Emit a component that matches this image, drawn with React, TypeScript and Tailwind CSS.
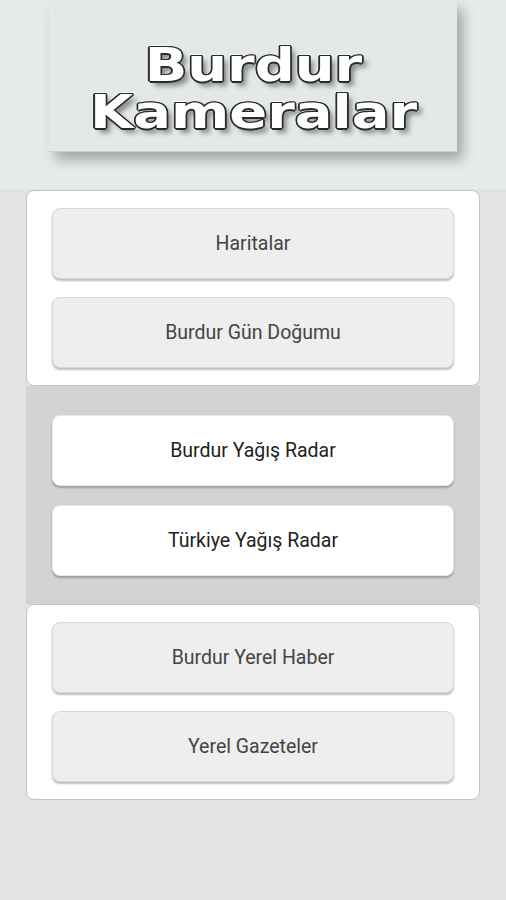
const groups = [
  { tone: "white", items: ["Haritalar", "Burdur Gün Doğumu"] },
  { tone: "gray", items: ["Burdur Yağış Radar", "Türkiye Yağış Radar"] },
  { tone: "white", items: ["Burdur Yerel Haber", "Yerel Gazeteler"] },
];

function MenuButton({ label, light }: { label: string; light: boolean }) {
  return (
    <button
      className={`h-[71px] w-full rounded-lg border text-[19.5px] shadow-[0_2px_2px_rgba(0,0,0,0.25)] ${
        light
          ? "bg-white border-[#e8e8e8] text-[#222]"
          : "bg-[#eeeeee] border-[#dcd6d6] text-[#444]"
      }`}
    >
      {label}
    </button>
  );
}

// outlined, fattened title text
const titleCls =
  "block font-['DejaVu_Sans',sans-serif] text-[47px] font-bold leading-[47px] text-white scale-x-[1.19] [-webkit-text-stroke:3px_#fff] [paint-order:stroke_fill] [text-shadow:1.5px_0_#2a2a2a,-1.5px_0_#2a2a2a,0_1.5px_#2a2a2a,0_-1.5px_#2a2a2a,1px_1px_#2a2a2a,-1px_-1px_#2a2a2a,1px_-1px_#2a2a2a,-1px_1px_#2a2a2a,4px_5px_5px_rgba(0,0,0,0.4)]";

export default function App() {
  return (
    <div className="min-h-[900px] w-[506px] bg-[#e3e3e3] font-['Roboto','Liberation_Sans',sans-serif]">
      <header className="h-[189px] bg-[#e6ecec] px-[49px]">
        <div className="flex h-[152px] flex-col items-center justify-center border-b border-[#c9cfcf] bg-[#e3e9e9] pt-[24px] shadow-[6px_8px_12px_rgba(0,0,0,0.3)]">
          <h1 className="flex flex-col items-center text-center">
            <span className={titleCls}>Burdur</span>
            <span className={titleCls}>Kameralar</span>
          </h1>
        </div>
      </header>

      <main className="mx-[26px] pt-px">
        {groups.map((g, i) => {
          const gray = g.tone === "gray";
          return (
            <section
              key={i}
              className={
                gray
                  ? "flex flex-col gap-[19px] bg-[#d3d3d3] px-[26px] pb-[28px] pt-[29px]"
                  : "flex flex-col gap-[18px] rounded-lg border border-[#c4c4c4] bg-white px-[25px] py-[17px]"
              }
            >
              {g.items.map((label) => (
                <MenuButton key={label} label={label} light={gray} />
              ))}
            </section>
          );
        })}
      </main>
    </div>
  );
}
